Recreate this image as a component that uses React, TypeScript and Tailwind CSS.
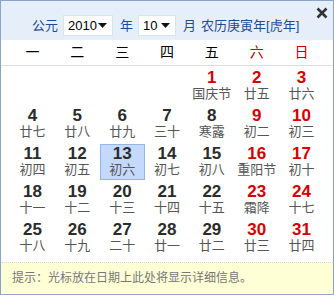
import React from "react";

type Day = { d: number; l: string; red?: boolean };

const week = ["一", "二", "三", "四", "五", "六", "日"];

const days: (Day | null)[] = [
  null, null, null, null,
  { d: 1, l: "国庆节", red: true }, { d: 2, l: "廿五", red: true }, { d: 3, l: "廿六", red: true },
  { d: 4, l: "廿七" }, { d: 5, l: "廿八" }, { d: 6, l: "廿九" }, { d: 7, l: "三十" }, { d: 8, l: "寒露" },
  { d: 9, l: "初二", red: true }, { d: 10, l: "初三", red: true },
  { d: 11, l: "初四" }, { d: 12, l: "初五" }, { d: 13, l: "初六" }, { d: 14, l: "初七" }, { d: 15, l: "初八" },
  { d: 16, l: "重阳节", red: true }, { d: 17, l: "初十", red: true },
  { d: 18, l: "十一" }, { d: 19, l: "十二" }, { d: 20, l: "十三" }, { d: 21, l: "十四" }, { d: 22, l: "十五" },
  { d: 23, l: "霜降", red: true }, { d: 24, l: "十七", red: true },
  { d: 25, l: "十八" }, { d: 26, l: "十九" }, { d: 27, l: "二十" }, { d: 28, l: "廿一" }, { d: 29, l: "廿二" },
  { d: 30, l: "廿三", red: true }, { d: 31, l: "廿四", red: true },
];

const cjk = "font-['Liberation_Sans','Noto_Sans_CJK_SC',sans-serif]";

function Select({ value, w }: { value: string; w: string }) {
  return (
    <div className={`${w} shrink-0 h-[21px] bg-white border border-[#dde3ec] flex items-center justify-between pl-[4px] pr-[5px] text-[13px] text-black`}>
      <span>{value}</span>
      <svg width="9" height="5" viewBox="0 0 9 5">
        <path d="M0 0h9L4.5 5z" fill="#111" />
      </svg>
    </div>
  );
}

export default function App() {
  return (
    <div className={`relative w-[334px] h-[295px] bg-white border border-[#8ba5c9] ${cjk}`}>
      {/* close */}
      <svg className="absolute right-[5px] top-[6px]" width="12" height="12" viewBox="0 0 12 12">
        <path d="M1.5 1.5l9 9M10.5 1.5l-9 9" stroke="#333" strokeWidth="2.6" />
      </svg>

      {/* header */}
      <div className="h-[39px] bg-[#e6eef9] flex items-center pt-[10px] pl-[31px] text-[13px] text-[#1c4c94] whitespace-nowrap">
        <span className="w-[26px] shrink-0">公元</span>
        <div className="ml-[5px]">
          <Select value="2010" w="w-[50px]" />
        </div>
        <span className="ml-[7px] shrink-0">年</span>
        <div className="ml-[5px]">
          <Select value="10" w="w-[38px]" />
        </div>
        <span className="ml-[7px] shrink-0">月</span>
        <span className="ml-[5px] shrink-0">农历庚寅年[虎年]</span>
      </div>

      {/* weekdays */}
      <div className="grid grid-cols-7 px-[9px] h-[26px] items-center text-[14px] border-b border-[#dddddd]">
        {week.map((w, i) => (
          <div key={w} className={`text-center ${i >= 5 ? "text-[#c00000]" : "text-black"}`}>{w}</div>
        ))}
      </div>

      {/* days */}
      <div className="grid grid-cols-7 px-[9px]">
        {days.map((day, i) => {
          if (!day) return <div key={i} className="h-[38px]" />;
          const sel = day.d === 13;
          return (
            <div
              key={i}
              className={
                sel
                  ? "mt-[2px] h-[36px] bg-[#c4d9fb] border border-[#93b4e6] flex flex-col items-center"
                  : "h-[38px] pt-[3px] flex flex-col items-center"
              }
            >
              <span className={`text-[17px] leading-[17px] font-bold ${day.red ? "text-[#d40000]" : "text-[#2b2b2b]"}`}>
                {day.d}
              </span>
              <span className="text-[13px] leading-[16px] text-[#555555]">{day.l}</span>
            </div>
          );
        })}
      </div>

      {/* tip */}
      <div className="mt-[6px] h-[31px] bg-[#ffffd6] border-t border-dotted border-[#d8d8c8] flex items-center pl-[11px] text-[12px] text-[#777777]">
        提示：光标放在日期上此处将显示详细信息。
      </div>
    </div>
  );
}
